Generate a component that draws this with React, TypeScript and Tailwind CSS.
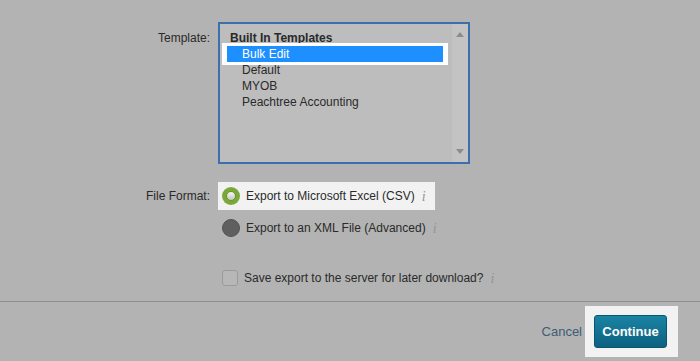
import React from "react";

const OPTIONS = ["Bulk Edit", "Default", "MYOB", "Peachtree Accounting"];

function InfoIcon() {
  return (
    <span className="ml-[7px] font-['Liberation_Serif',serif] italic text-[14px] text-[#959595]">i</span>
  );
}

export default function App() {
  return (
    <div className="w-[700px] h-[361px] bg-[#b3b3b3] font-['Liberation_Sans',Arial,sans-serif] text-[12px] text-[#2a2a2a] flex flex-col overflow-hidden">
      <div className="flex-1 pt-[22px]">
        {/* Template */}
        <div className="flex">
          <div className="w-[210px] text-right pt-[8px] leading-[16px]">Template:</div>
          <div className="ml-[8px] w-[252px] h-[142px] border-2 border-[#3b70ae] bg-[#bdbdbd] flex">
            <div className="flex-1 pt-[6px] leading-[16px]">
              <div className="pl-[10px] font-bold">Built In Templates</div>
              <div className="ml-[7px] mr-[9px]">
                {OPTIONS.map((o, i) =>
                  i === 0 ? (
                    <div key={o} className="-mx-[5px] -my-[3px] px-[5px] py-[3px] bg-white relative">
                      <div className="bg-[#1e8fff] text-white pl-[15px] h-[16px]">{o}</div>
                    </div>
                  ) : (
                    <div key={o} className="pl-[15px] h-[16px]">{o}</div>
                  )
                )}
              </div>
            </div>
            <div className="w-[16px] bg-[#c3c3c3] flex flex-col items-center justify-between py-[8px]">
              <svg width="8" height="5" viewBox="0 0 8 5"><path d="M4 0L8 5H0z" fill="#8c8c8c" /></svg>
              <svg width="8" height="5" viewBox="0 0 8 5"><path d="M0 0H8L4 5z" fill="#8c8c8c" /></svg>
            </div>
          </div>
        </div>

        {/* File format */}
        <div className="flex mt-[18px]">
          <div className="w-[210px] text-right leading-[28px]">File Format:</div>
          <div className="ml-[8px] flex flex-col items-start gap-[4px]">
            <div className="h-[28px] bg-[#f2f2f2] flex items-center pl-[4px] pr-[9px]">
              <span className="w-[18px] h-[18px] rounded-full bg-[#7aa93a] flex items-center justify-center">
                <span className="w-[10px] h-[10px] rounded-full border border-[#6a9530] bg-gradient-to-b from-[#f6f6f6] to-[#c6c6c6]" />
              </span>
              <span className="ml-[6px]">Export to Microsoft Excel (CSV)</span>
              <InfoIcon />
            </div>
            <div className="h-[28px] flex items-center pl-[4px]">
              <span className="w-[18px] h-[18px] rounded-full bg-[#5f5f5f] border border-[#525252]" />
              <span className="ml-[6px]">Export to an XML File (Advanced)</span>
              <InfoIcon />
            </div>
            <div className="h-[28px] mt-[18px] flex items-center pl-[4px]">
              <span className="w-[16px] h-[16px] rounded-[3px] border border-[#9a9a9a] bg-[#b7b7b7]" />
              <span className="ml-[6px]">Save export to the server for later download?</span>
              <InfoIcon />
            </div>
          </div>
        </div>
      </div>

      {/* Footer */}
      <div className="h-[60px] border-t border-[#8f8f8f] flex items-center justify-end pr-[22px]">
        <span className="text-[#3c5d76] text-[13px] mr-[3px]">Cancel</span>
        <div className="bg-[#f2f2f2] pl-[9px] pr-[11px] py-[9px]">
          <button className="w-[73px] h-[33px] rounded-[3px] bg-gradient-to-b from-[#1a84a3] to-[#0d6080] border border-[#0b5573] text-white font-bold text-[13px]">
            Continue
          </button>
        </div>
      </div>
    </div>
  );
}
